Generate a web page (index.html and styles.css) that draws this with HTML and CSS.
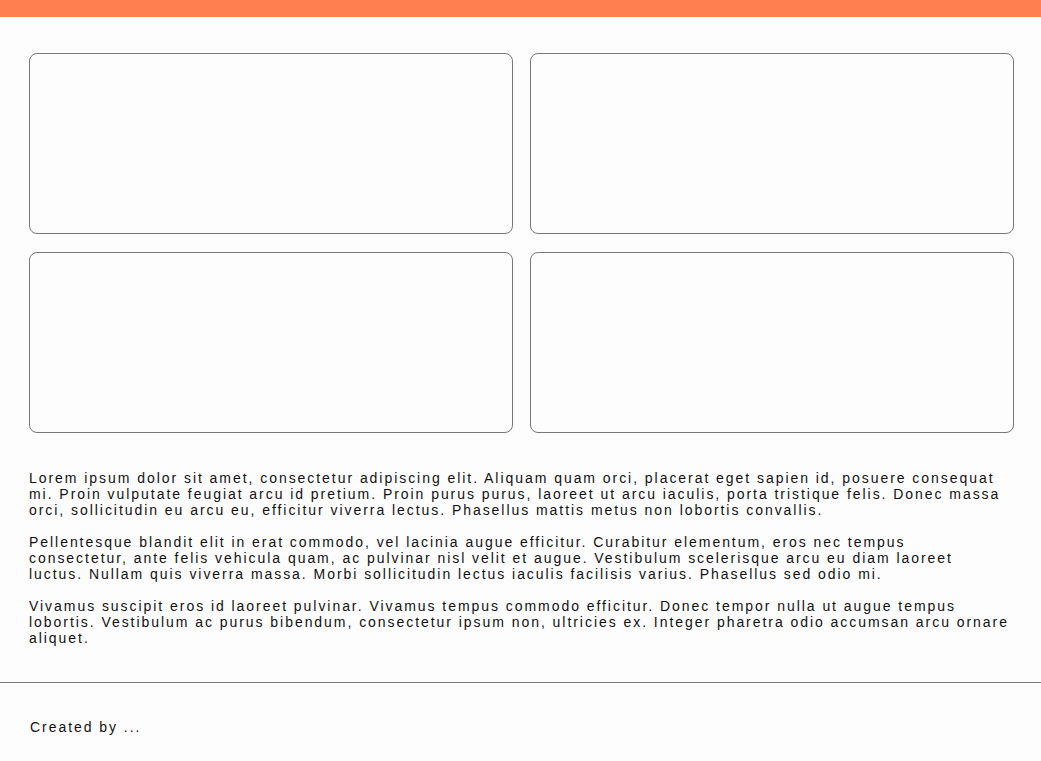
FILE: index.html
```html
<!DOCTYPE html>
<html>
<head>
<meta charset="utf-8">
<link rel="stylesheet" href="styles.css">
</head>
<body>
<header class="topbar"></header>
<main class="content">
  <section class="cards">
    <div class="card"></div>
    <div class="card"></div>
    <div class="card"></div>
    <div class="card"></div>
  </section>
  <section class="text">
    <p>Lorem ipsum dolor sit amet, consectetur adipiscing elit. Aliquam quam orci, placerat eget sapien id, posuere consequat mi. Proin vulputate feugiat arcu id pretium. Proin purus purus, laoreet ut arcu iaculis, porta tristique felis. Donec massa orci, sollicitudin eu arcu eu, efficitur viverra lectus. Phasellus mattis metus non lobortis convallis.</p>
    <p>Pellentesque blandit elit in erat commodo, vel lacinia augue efficitur. Curabitur elementum, eros nec tempus consectetur, ante felis vehicula quam, ac pulvinar nisl velit et augue. Vestibulum scelerisque arcu eu diam laoreet luctus. Nullam quis viverra massa. Morbi sollicitudin lectus iaculis facilisis varius. Phasellus sed odio mi.</p>
    <p>Vivamus suscipit eros id laoreet pulvinar. Vivamus tempus commodo efficitur. Donec tempor nulla ut augue tempus lobortis. Vestibulum ac purus bibendum, consectetur ipsum non, ultricies ex. Integer pharetra odio accumsan arcu ornare aliquet.</p>
  </section>
</main>
<footer class="footer">
  <p>Created by ...</p>
</footer>
</body>
</html>
```
FILE: styles.css
```css
html, body {
  margin: 0;
  padding: 0;
  background: #fdfdfd;
}
body {
  font-family: "Liberation Sans", Arial, sans-serif;
  font-size: 14px;
  line-height: 16px;
  letter-spacing: 1.95px;
  color: #111;
}
.topbar {
  height: 17px;
  background: #ff7f50;
}
.content {
  padding: 36px 27px 0 29px;
}
.cards {
  display: grid;
  grid-template-columns: 1fr 1fr;
  grid-auto-rows: 181px;
  gap: 18px 17px;
}
.card {
  border: 1px solid #777;
  border-radius: 8px;
}
.text {
  padding: 37px 4px 0 0;
}
.text p {
  margin: 0 0 16px 0;
}
.footer {
  margin-top: 36px;
  border-top: 1px solid #777;
  padding: 36px 30px 20px;
}
.footer p {
  margin: 0;
}
```
